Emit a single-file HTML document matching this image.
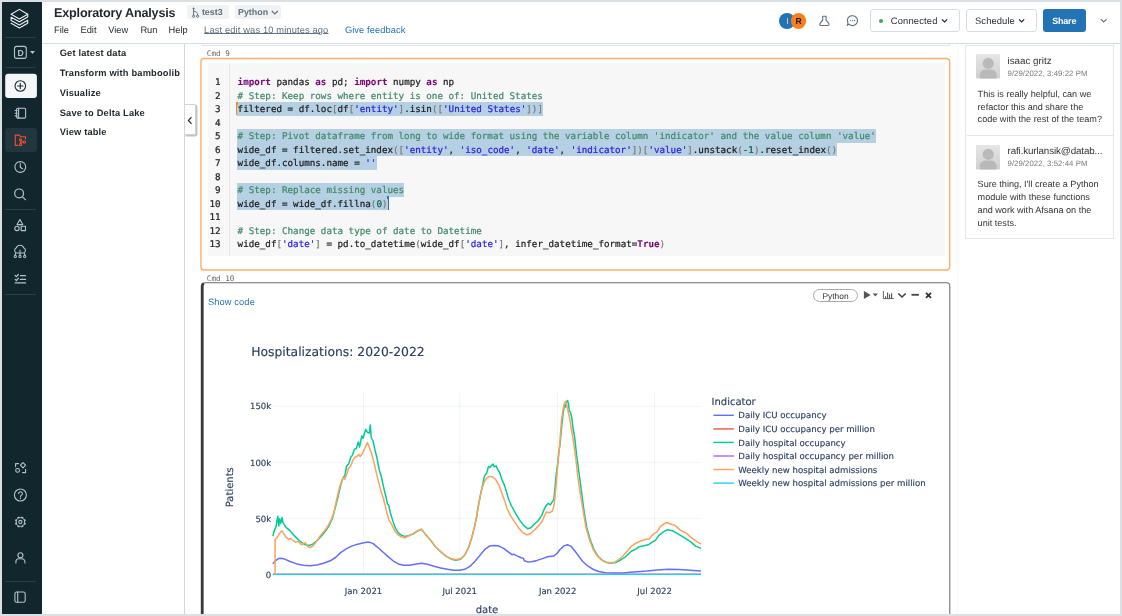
<!DOCTYPE html><html><head><meta charset="utf-8"><title>Exploratory Analysis</title><style>
*{box-sizing:border-box;margin:0;padding:0}
html,body{width:1122px;height:616px;overflow:hidden;background:#dce0e3}
body{font-family:"Liberation Sans",Arial,sans-serif;color:#1f272d;position:relative;text-rendering:geometricPrecision}
.abs{position:absolute}
.t{position:absolute;white-space:pre;line-height:1}
#bg{position:absolute;left:2px;top:2px;width:1118px;height:612px;background:#fff}
#page{position:absolute;left:2px;top:2px;width:1118px;height:612px;overflow:hidden;will-change:transform}
#side{position:absolute;left:0;top:0;width:40.3px;height:612px;background:#12262e}
.sep{position:absolute;left:3.2px;width:31.2px;height:1px;background:#2b3f48}
.ic{position:absolute;overflow:visible}
.menu{font-size:9.3px;color:#1f272d}
.lp{font-size:9.3px;font-weight:bold;color:#1f272d;left:57.7px;letter-spacing:0.17px}
.mono{font-family:"DejaVu Sans Mono","Liberation Mono",monospace}
.code{font-family:"DejaVu Sans Mono","Liberation Mono",monospace;font-size:9.22px;color:#1c1c1c;-webkit-text-stroke:0.22px currentColor}
.ln{position:absolute;left:206px;width:12.6px;text-align:right;font-family:"DejaVu Sans Mono","Liberation Mono",monospace;font-size:9.22px;color:#222;line-height:1;white-space:pre}
.cl{position:absolute;left:235.6px;white-space:pre;line-height:1}
.sel{position:absolute;background:#b5d0e3;height:13.7px}
.k{color:#7a0874;font-weight:bold;-webkit-text-stroke:0.08px currentColor}.c{color:#408a6a}.s{color:#2a22e6}.b{color:#7c7c7c}.n{color:#116644}
.cm{font-size:9.1px;color:#333;left:975.6px}
.dj{font-family:"DejaVu Sans","Liberation Sans",sans-serif}
</style></head><body><div id="bg"></div><div id="page">
<div id="side">
<svg class="ic" style="left:0;top:0" width="40" height="612" viewBox="2 2 40 612" fill="none" stroke-linecap="round" stroke-linejoin="round">
<g stroke="#eef1f3" stroke-width="1.1"><path d="M19.4,9.4 L27.7,14.3 L19.4,18.9 L11.1,14.3 Z"/><path d="M27.7,14.3 V17 L19.4,21.8 L11.1,17.2 V20.4 L19.4,24.9 L27.7,20.2 V23.2 L19.4,27.9 L11.1,23.2"/></g>
<g stroke="#b6c2ca" stroke-width="1.1"><rect x="14.5" y="46.4" width="11.8" height="12" rx="2.2"/></g><path d="M30,51 h5 l-2.5,3 z" fill="#b6c2ca"/>
<rect x="5.2" y="73.8" width="31.7" height="24.1" rx="3" fill="#f4f6f7"/><g stroke="#1b2a32" stroke-width="1.1"><circle cx="20.3" cy="86" r="5.3"/><path d="M20.3,83.3 v5.4 M17.6,86 h5.4"/></g>
<g stroke="#b6c2ca" stroke-width="1.1"><rect x="16.6" y="108.3" width="9" height="9.8" rx="1"/><path d="M18.6,108.3 v9.8 M15.2,110.5 h2 M15.2,113.2 h2 M15.2,115.9 h2"/></g>
<rect x="5.2" y="127.9" width="31.7" height="24.1" rx="3" fill="#22363f"/><g stroke="#ff4b2f" stroke-width="1.1"><path d="M17.9,145.4 h-2.6 v-10.3 h3.9 l1.4,1.7 h4.9 v2.2"/><circle cx="20.6" cy="139.9" r="1.1"/><circle cx="20.6" cy="144.5" r="1.1"/><circle cx="24.4" cy="142.1" r="1.1"/><path d="M20.6,141 v2.4 M21.7,142.1 h1.6"/></g>
<g stroke="#b6c2ca" stroke-width="1.1"><circle cx="20.3" cy="167" r="5.4"/><path d="M20.3,163.6 v3.6 l2.3,1.6"/></g>
<g stroke="#b6c2ca" stroke-width="1.2"><circle cx="19.1" cy="193.4" r="4.4"/><path d="M22.3,196.6 L25.4,199.7"/></g>
<g stroke="#b6c2ca" stroke-width="1.1"><path d="M19.9,219.6 L22.7,224.6 H17.1 Z"/><circle cx="17" cy="228.4" r="2.2"/><rect x="21.2" y="226.3" width="4.3" height="4.3"/></g>
<g stroke="#b6c2ca" stroke-width="1.05"><path d="M15.8,252.3 a2.6,2.6 0 0 1 0.6,-4.6 a3.9,3.9 0 0 1 7.3,0 a2.6,2.6 0 0 1 0.6,4.6"/><path d="M20,250 v5 M15.3,255 v-2 h9.4 v2"/><circle cx="15.3" cy="256.4" r="1.1"/><circle cx="20" cy="256.4" r="1.1"/><circle cx="24.7" cy="256.4" r="1.1"/></g>
<g stroke="#b6c2ca" stroke-width="1.2"><path d="M15.2,275.5 l1.2,1.2 l2,-2.4 M20.4,275.6 h5.2 M15.2,279.3 l1.2,1.2 l2,-2.4 M20.4,279.4 h5.2 M15.2,282.9 h10.4"/></g>
<g stroke="#b6c2ca" stroke-width="1.1"><path d="M18.6,463.6 h-3 v3.2 M22.6,472.6 h3 v-3.2"/><path d="M23,462.6 l2.6,2.6 l-2.6,2.6 l-2.6,-2.6 z"/><circle cx="17.6" cy="470.4" r="1.9"/></g>
<g stroke="#b6c2ca" stroke-width="1.1"><circle cx="20.4" cy="495" r="6"/><path d="M18.6,493.6 a1.9,1.9 0 1 1 2.8,1.7 c-0.7,0.4 -1,0.8 -1,1.6"/></g><circle cx="20.4" cy="498.6" r="0.7" fill="#b6c2ca"/>
<g stroke="#b6c2ca" stroke-width="1.1"><circle cx="20.4" cy="522" r="4.2"/><path d="M24.37,523.65 L25.48,524.10 M22.05,525.97 L22.50,527.08 M18.75,525.97 L18.30,527.08 M16.43,523.65 L15.32,524.10 M16.43,520.35 L15.32,519.90 M18.75,518.03 L18.30,516.92 M22.05,518.03 L22.50,516.92 M24.37,520.35 L25.48,519.90 " stroke-width="2.2" stroke-linecap="butt"/><circle cx="20.4" cy="522" r="3.4" fill="#12262e" stroke="none"/><circle cx="20.4" cy="522" r="1.6"/></g>
<g stroke="#b6c2ca" stroke-width="1.1"><circle cx="20.4" cy="555.2" r="2.5"/><path d="M15.9,563 v-1.2 a3,3 0 0 1 3,-3 h3 a3,3 0 0 1 3,3 v1.2"/></g>
<g stroke="#b6c2ca" stroke-width="1.1"><rect x="14.9" y="592" width="10.3" height="10.3" rx="1.8"/><path d="M17.7,592 v10.3"/></g>
</svg>
<span class="t" style="left:15.6px;top:47px;font-size:8.6px;font-weight:bold;color:#b6c2ca;">D</span>
<div class="sep" style="top:34.8px"></div>
<div class="sep" style="top:65.2px"></div>
<div class="sep" style="top:207.1px"></div>
<div class="sep" style="top:291.9px"></div>
<div class="sep" style="top:579.1px"></div>
</div>
<div class="abs" style="left:40px;top:41px;width:1078px;height:1px;background:#d3dce6"></div>
<span class="t" id="title" style="left:52px;top:5px;font-size:12.6px;letter-spacing:-0.17px;font-weight:bold;color:#1f272d">Exploratory Analysis</span>
<div class="abs" style="left:185.2px;top:2.9px;width:41.8px;height:14.3px;background:#f0f2f4;border-radius:3px"></div>
<svg class="ic" style="left:189px;top:4.5px" width="10" height="12" viewBox="191 6.5 10 12" fill="none" stroke="#5f7281" stroke-width="1"><circle cx="193.6" cy="15.7" r="1.1"/><circle cx="197.6" cy="15.7" r="1.1"/><circle cx="193.6" cy="8" r="0.6" fill="#5f7281"/><path d="M193.6,8 v6.6 M193.6,10.8 c2.8,0 4,1.2 4,3.8"/></svg>
<span class="t" id="test3" style="left:199.9px;top:6px;font-size:8.9px;font-weight:bold;color:#5f7281">test3</span>
<div class="abs" style="left:233.1px;top:2.9px;width:46.3px;height:14.3px;background:#f0f2f4;border-radius:3px"></div>
<span class="t" id="pybadge" style="left:236px;top:6px;font-size:8.9px;font-weight:bold;color:#5f7281">Python</span>
<svg class="ic" style="left:269.2px;top:8.4px" width="8" height="6" viewBox="0 0 8 6" fill="none" stroke="#5f7281" stroke-width="1.2"><path d="M0.8,1 L3.8,4 L6.8,1"/></svg>
<span class="t menu" id="m1" style="left:52px;top:24px">File</span>
<span class="t menu" id="m2" style="left:78.5px;top:24px">Edit</span>
<span class="t menu" id="m3" style="left:106.2px;top:24px">View</span>
<span class="t menu" id="m4" style="left:138.4px;top:24px">Run</span>
<span class="t menu" id="m5" style="left:166.5px;top:24px">Help</span>
<span class="t" id="lastedit" style="left:202.1px;top:24px;font-size:9.3px;letter-spacing:0.14px;color:#5f7281;text-decoration:underline;text-underline-offset:0.3px;text-decoration-thickness:0.8px">Last edit was 10 minutes ago</span>
<span class="t" id="feedback" style="left:342.9px;top:24px;font-size:9.3px;letter-spacing:0.09px;color:#2272b4">Give feedback</span>
<div class="abs" style="left:777.3px;top:11px;width:15.8px;height:15.8px;border-radius:50%;background:#2272b4"></div>
<span class="t" style="left:784.2px;top:15px;font-size:8.6px;color:#d5e6f4">I</span>
<div class="abs" style="left:788.6px;top:11px;width:15.8px;height:15.8px;border-radius:50%;background:#f97e1c"></div>
<span class="t" style="left:793.4px;top:15px;font-size:8.6px;font-weight:bold;color:#1a1a1a">R</span>
<svg class="ic" style="left:815px;top:11px" width="46" height="16" viewBox="817 13 46 16" fill="none" stroke="#5f7281" stroke-width="1.1" stroke-linejoin="round" stroke-linecap="round"><path d="M822.7,16.2 h3.4 v4 l2.8,3.4 q0.5,1.9 -1,1.9 h-7 q-1.5,0 -1,-1.9 l2.8,-3.4 z"/><path d="M852.6,15.6 a5,5 0 1 1 -3.6,8.5 l-1.6,1.2 l0.5,-2.3 a5,5 0 0 1 4.7,-7.4 z"/><path d="M850.6,20.6 h0.1 M852.6,20.6 h0.1 M854.6,20.6 h0.1" stroke-width="1.2"/></svg>
<div class="abs" style="left:868.2px;top:7.3px;width:90.2px;height:22.5px;border:1px solid #d3dde7;border-radius:3px"></div>
<div class="abs" style="left:876.8px;top:16.7px;width:4.4px;height:4.4px;border-radius:50%;background:#3ba65e"></div>
<span class="t" id="connected" style="left:888.8px;top:14px;font-size:9.4px;letter-spacing:0.15px;color:#1f272d">Connected</span>
<svg class="ic" style="left:939px;top:15.6px" width="8" height="6" viewBox="0 0 8 6" fill="none" stroke="#1f272d" stroke-width="1.15"><path d="M1,1.3 L3.6,3.9 L6.2,1.3"/></svg>
<div class="abs" style="left:963.8px;top:7.3px;width:71.2px;height:22.5px;border:1px solid #d3dde7;border-radius:3px"></div>
<span class="t" id="schedule" style="left:973px;top:14px;font-size:9.4px;letter-spacing:0.1px;color:#1f272d">Schedule</span>
<svg class="ic" style="left:1015.7px;top:15.6px" width="8" height="6" viewBox="0 0 8 6" fill="none" stroke="#1f272d" stroke-width="1.15"><path d="M1,1.3 L3.6,3.9 L6.2,1.3"/></svg>
<div class="abs" style="left:1041px;top:7.3px;width:43.1px;height:22.6px;background:#2272b4;border-radius:3px"></div>
<span class="t" id="share" style="left:1050.2px;top:15px;font-size:9px;letter-spacing:-0.2px;font-weight:bold;color:#fff">Share</span>
<svg class="ic" style="left:1097.6px;top:15.6px" width="8" height="6" viewBox="0 0 8 6" fill="none" stroke="#5f7281" stroke-width="1.1"><path d="M0.8,1.2 L3.7,4 L6.6,1.2"/></svg>
<div class="abs" style="left:182.2px;top:42px;width:1px;height:570px;background:#d6d6d6"></div>
<span class="t lp" id="l1" style="top:47.00px">Get latest data</span>
<span class="t lp" id="l2" style="top:67.00px">Transform with bamboolib</span>
<span class="t lp" id="l3" style="top:87.00px">Visualize</span>
<span class="t lp" id="l4" style="top:107.00px">Save to Delta Lake</span>
<span class="t lp" id="l5" style="top:126.00px">View table</span>
<div class="abs" style="left:182.6px;top:101.7px;width:11.4px;height:31.3px;background:#fff;border:1px solid #d2d2d2;border-left:none;border-radius:0 2px 2px 0;box-shadow:1px 1px 0 0.5px #c4c4c4"></div>
<svg class="ic" style="left:185px;top:114px" width="6" height="9" viewBox="0 0 6 9" fill="none" stroke="#333" stroke-width="1.25"><path d="M4.5,1.1 L1.4,4.5 L4.5,7.9"/></svg>
<div class="abs" style="left:198.6px;top:42px;width:749.7px;height:2px;border:1px solid #dfe3e7;border-top:none;border-radius:0 0 3px 3px"></div>
<div class="abs" style="left:954.9px;top:42px;width:1px;height:570px;background:#f8f9f9"></div>
<span class="t mono" id="cmd9" style="left:204.8px;top:48px;font-size:7.65px;color:#6a6a6a">Cmd 9</span>
<svg class="ic" style="left:0;top:0" width="1118" height="612" viewBox="2 2 1118 612" fill="none"><rect x="200.95" y="58.55" width="748.7" height="211.4" rx="3" stroke="#fcae6b" stroke-width="1.4"/></svg>
<div class="abs" style="left:205.8px;top:61px;width:737.2px;height:192.5px;background:#f7f7f7"></div>
<div class="abs" style="left:226.5px;top:61px;width:1px;height:192.5px;background:#e4e4e4"></div>
<div class="sel" style="left:235.4px;top:99.98px;width:305.9px"></div>
<div class="sel" style="left:235.4px;top:127.06px;width:638.9px"></div>
<div class="sel" style="left:235.4px;top:140.60px;width:600.1px"></div>
<div class="sel" style="left:235.4px;top:154.14px;width:139.4px"></div>
<div class="sel" style="left:235.4px;top:181.22px;width:167.1px"></div>
<div class="sel" style="left:235.4px;top:194.76px;width:150.5px"></div>
<div class="abs" style="left:234.2px;top:99.78px;width:1.3px;height:13.4px;background:#f28a1c"></div>
<div class="abs" style="left:234px;top:99.58px;width:2.4px;height:3px;background:#f28a1c;border-radius:0.6px"></div>
<div class="abs" style="left:385.5px;top:194.56px;width:1.2px;height:13.4px;background:#2272b4"></div>
<div class="abs" style="left:385.1px;top:194.36px;width:2.2px;height:3px;background:#2272b4;border-radius:0.6px"></div>
<div class="code">
<span class="ln" style="top:76.00px">1</span>
<span class="cl" id="c1" style="top:76.00px"><span class="k">import</span> pandas <span class="k">as</span> pd; <span class="k">import</span> numpy <span class="k">as</span> np</span>
<span class="ln" style="top:90.00px">2</span>
<span class="cl" id="c2" style="top:90.00px"><span class="c"># Step: Keep rows where entity is one of: United States</span></span>
<span class="ln" style="top:103.00px">3</span>
<span class="cl" id="c3" style="top:103.00px">filtered = df.loc<span class="b">[</span>df<span class="b">[</span><span class="s">'entity'</span><span class="b">]</span>.isin<span class="b">([</span><span class="s">'United States'</span><span class="b">])]</span></span>
<span class="ln" style="top:117.00px">4</span>
<span class="ln" style="top:130.00px">5</span>
<span class="cl" id="c5" style="top:130.00px"><span class="c"># Step: Pivot dataframe from long to wide format using the variable column 'indicator' and the value column 'value'</span></span>
<span class="ln" style="top:144.00px">6</span>
<span class="cl" id="c6" style="top:144.00px">wide_df = filtered.set_index<span class="b">([</span><span class="s">'entity'</span>, <span class="s">'iso_code'</span>, <span class="s">'date'</span>, <span class="s">'indicator'</span><span class="b">])[</span><span class="s">'value'</span><span class="b">]</span>.unstack<span class="b">(</span><span class="n">-1</span><span class="b">)</span>.reset_index<span class="b">()</span></span>
<span class="ln" style="top:157.00px">7</span>
<span class="cl" id="c7" style="top:157.00px">wide_df.columns.name = <span class="s">''</span></span>
<span class="ln" style="top:171.00px">8</span>
<span class="ln" style="top:184.00px">9</span>
<span class="cl" id="c9" style="top:184.00px"><span class="c"># Step: Replace missing values</span></span>
<span class="ln" style="top:198.00px">10</span>
<span class="cl" id="c10" style="top:198.00px">wide_df = wide_df.fillna<span class="b">(</span><span class="n">0</span><span class="b">)</span></span>
<span class="ln" style="top:211.00px">11</span>
<span class="ln" style="top:225.00px">12</span>
<span class="cl" id="c12" style="top:225.00px"><span class="c"># Step: Change data type of date to Datetime</span></span>
<span class="ln" style="top:238.00px">13</span>
<span class="cl" id="c13" style="top:238.00px">wide_df<span class="b">[</span><span class="s">'date'</span><span class="b">]</span> = pd.to_datetime<span class="b">(</span>wide_df<span class="b">[</span><span class="s">'date'</span><span class="b">]</span>, infer_datetime_format=<span class="k">True</span><span class="b">)</span></span>
</div>
<span class="t mono" id="cmd10" style="left:204.8px;top:273px;font-size:7.65px;color:#6a6a6a">Cmd 10</span>
<svg class="ic" style="left:0;top:0" width="1118" height="612" viewBox="2 2 1118 612" fill="none"><path d="M202.6,620 V285.9 a3.2,3.2 0 0 1 3.2,-3.2 H946.6 a3.2,3.2 0 0 1 3.2,3.2 V620" stroke="#6c6c6c" stroke-width="1.05"/><path d="M202.2,620 V286 a3,3 0 0 1 1.6,-2.6" stroke="#3a3a3a" stroke-width="2.8"/></svg>
<span class="t" id="showcode" style="left:206px;top:296px;font-size:9.3px;letter-spacing:0.1px;color:#2272b4">Show code</span>
<div class="abs" style="left:811.1px;top:287.3px;width:44.7px;height:12.5px;border:1px solid #aaa;border-radius:7px"></div>
<span class="t" id="pypill" style="left:820.5px;top:290px;font-size:8.4px;color:#333">Python</span>
<svg class="ic" style="left:858px;top:286px" width="76" height="16" viewBox="860 288 76 16"><path d="M863.9,291 L870.7,295 L863.9,299 Z" fill="#555"/><path d="M872.7,293.6 h5.2 l-2.6,2.9 z" fill="#555"/><g stroke="#555" fill="none" stroke-width="0.9"><path d="M883.4,291 v7.6 h10.4"/><path d="M885.6,298.6 v-2.4 M887.6,298.6 v-6 M889.6,298.6 v-4.4 M891.6,298.6 v-5.4" stroke-width="1.1"/></g><path d="M898.3,293.5 L902,297 L905.7,293.5" fill="none" stroke="#444" stroke-width="1.6"/><path d="M911.5,294.8 h7.4" stroke="#444" stroke-width="1.8"/><path d="M926,292.8 L931,297.8 M931,292.8 L926,297.8" stroke="#333" stroke-width="1.8"/></svg>
<svg class="ic dj" style="left:0;top:0" width="1118" height="612" viewBox="2 2 1118 612" font-family="DejaVu Sans, Liberation Sans, sans-serif">
<g stroke="#ebf0f8" stroke-width="0.75">
<path d="M272.8,406.3 H701.3"/>
<path d="M272.8,462.4 H701.3"/>
<path d="M272.8,518.4 H701.3"/>
<path d="M363.5,391.5 V574.4"/>
<path d="M459.7,391.5 V574.4"/>
<path d="M557.6,391.5 V574.4"/>
<path d="M654.6,391.5 V574.4"/>
</g>
<g fill="none" stroke-width="1.5" stroke-linejoin="round">
<path d="M272.9,563.9 L275.3,560.8 L278.0,558.8 L280.7,558.2 L284.7,559.1 L290.0,561.5 L296.7,563.9 L303.4,565.2 L310.1,565.8 L316.8,565.0 L323.5,563.2 L330.2,560.8 L335.5,557.5 L340.9,552.4 L346.2,548.8 L351.6,546.1 L356.9,544.4 L363.6,542.8 L368.9,542.1 L372.9,543.4 L377.0,546.8 L382.3,551.5 L387.6,556.1 L393.0,560.8 L398.3,563.9 L403.7,565.2 L409.0,565.2 L415.3,564.2 L421.4,563.2 L427.4,564.2 L434.1,566.2 L440.7,567.9 L447.4,569.3 L454.1,570.2 L459.5,570.3 L464.8,569.3 L470.2,566.2 L475.5,560.8 L480.9,554.1 L485.5,548.8 L489.5,546.1 L494.2,545.5 L498.9,546.1 L503.6,548.4 L508.9,552.4 L512.3,554.8 L513.6,554.1 L517.0,555.9 L521.0,557.8 L523.4,558.2 L524.3,560.8 L527.6,561.9 L531.7,561.8 L537.0,560.4 L542.4,558.6 L547.7,556.8 L553.7,556.1 L557.0,553.5 L560.0,549.5 L564.0,545.9 L567.4,544.8 L570.7,546.1 L574.7,550.8 L578.7,556.1 L582.7,561.5 L588.1,566.2 L593.4,569.5 L598.8,571.5 L605.5,572.7 L613.5,573.1 L622.8,572.9 L633.5,571.9 L646.9,571.1 L657.6,570.1 L668.3,569.3 L679.0,569.5 L689.7,570.2 L701.0,571.1" stroke="#636efa"/>
<path d="M272.9,574.3 H701" stroke="#ef553b" stroke-width="1.2"/>
<path d="M272.9,536.1 L274.0,531.4 L276.0,526.7 L277.8,516.3 L278.8,526.0 L279.6,518.7 L280.7,523.4 L282.0,517.6 L283.0,522.7 L286.0,527.4 L290.0,530.7 L294.0,535.4 L298.0,539.4 L302.0,542.8 L305.4,544.8 L308.8,545.5 L312.8,544.1 L316.8,540.8 L320.8,536.8 L324.8,532.1 L328.8,526.1 L332.2,518.7 L334.8,509.4 L337.5,499.0 L340.5,485.8 L343.1,477.7 L344.9,475.6 L346.6,466.0 L348.8,463.9 L350.7,457.3 L352.5,455.1 L354.4,449.2 L356.3,448.5 L358.3,441.9 L359.5,447.0 L361.7,436.1 L363.1,438.3 L365.6,429.5 L367.5,432.4 L369.4,432.9 L370.3,425.1 L371.2,437.5 L372.9,440.5 L374.8,449.2 L377.0,458.0 L379.2,469.7 L381.4,477.0 L383.6,487.3 L385.8,496.0 L387.5,504.1 L388.7,504.8 L390.3,512.7 L393.0,521.4 L395.7,528.7 L398.3,532.8 L401.7,535.4 L405.0,536.4 L409.0,535.4 L413.0,534.1 L417.0,531.4 L421.4,529.3 L424.7,533.4 L430.0,539.4 L435.4,546.8 L440.7,551.7 L446.1,556.4 L451.4,559.2 L456.1,560.3 L460.8,559.0 L464.8,555.0 L468.8,547.0 L472.2,536.1 L474.8,525.4 L476.8,516.0 L477.6,510.0 L480.5,494.5 L482.7,484.3 L484.4,476.4 L486.7,473.0 L488.4,466.7 L490.1,467.3 L491.3,465.6 L493.0,464.1 L494.1,466.7 L496.1,465.9 L498.1,470.1 L499.8,473.0 L502.0,479.8 L504.3,484.9 L506.6,492.3 L508.9,500.2 L511.6,506.0 L515.6,513.4 L519.6,520.1 L523.6,525.4 L527.6,528.7 L531.0,527.7 L534.3,524.1 L538.3,520.7 L541.7,515.4 L544.4,508.7 L546.4,505.3 L548.1,503.4 L550.3,504.8 L552.6,501.4 L553.8,499.7 L554.9,488.9 L556.0,476.4 L557.7,462.7 L558.9,451.4 L560.0,444.5 L561.9,424.2 L563.4,411.5 L564.6,404.7 L565.5,407.1 L566.5,401.7 L567.5,400.6 L568.5,403.7 L569.2,411.0 L570.4,412.0 L571.7,417.3 L573.1,429.0 L574.6,436.8 L576.7,455.9 L579.0,473.0 L581.3,490.0 L583.9,510.0 L586.6,526.7 L589.9,538.8 L593.9,549.5 L597.9,556.1 L602.4,560.4 L606.8,562.6 L610.8,563.0 L614.8,562.8 L620.2,560.2 L625.5,556.8 L630.9,551.5 L636.2,548.8 L638.9,546.8 L642.9,546.1 L648.2,544.8 L652.3,542.1 L655.6,540.1 L658.9,535.4 L663.0,532.1 L667.6,529.7 L672.3,530.7 L677.0,533.4 L681.7,536.1 L687.0,539.4 L691.0,542.1 L695.7,546.1 L701.0,548.4" stroke="#00cc96"/>
<path d="M272.9,574.3 H701" stroke="#ab63fa" stroke-width="1.2"/>
<path d="M275.1,574.2 L275.1,539.8 L278.0,536.1 L280.7,531.7 L282.3,531.0 L284.0,534.1 L286.0,537.4 L288.7,539.2 L290.7,538.5 L293.4,540.8 L295.4,542.1 L298.0,541.2 L301.4,544.8 L304.1,543.0 L305.4,542.8 L308.1,546.8 L310.1,547.5 L312.8,546.1 L315.5,542.8 L319.5,536.8 L323.5,532.1 L327.5,526.7 L330.8,520.7 L333.5,513.4 L335.5,505.3 L336.8,499.0 L339.7,486.5 L341.9,480.7 L343.4,477.7 L344.9,479.2 L347.0,473.4 L348.5,468.2 L350.7,466.1 L352.9,460.2 L354.8,457.3 L356.8,456.5 L358.7,454.4 L360.2,456.5 L362.4,453.6 L364.6,448.5 L367.5,442.7 L369.7,448.5 L371.9,454.4 L374.1,463.1 L376.3,472.6 L378.5,481.4 L380.7,490.2 L383.6,499.0 L386.3,510.7 L389.0,520.0 L391.7,524.7 L395.0,531.4 L398.3,535.0 L401.7,537.0 L405.0,537.7 L409.0,535.8 L413.0,533.7 L417.0,531.0 L421.4,529.1 L424.7,533.4 L430.0,539.4 L435.4,546.8 L440.7,551.5 L446.1,556.1 L451.4,558.8 L456.1,559.8 L460.8,558.6 L464.8,554.8 L468.8,546.8 L472.2,536.1 L474.8,525.4 L476.8,516.0 L477.6,510.0 L479.9,498.0 L482.2,487.7 L484.4,481.5 L487.3,477.5 L490.1,476.4 L493.0,477.2 L495.8,479.8 L499.2,485.5 L502.0,493.4 L504.9,501.4 L506.9,508.0 L510.3,515.4 L514.3,521.4 L518.3,527.4 L522.3,532.1 L525.6,534.4 L527.6,534.8 L530.3,533.7 L534.3,530.1 L538.3,526.1 L541.7,522.1 L544.4,516.0 L546.4,512.0 L549.7,512.7 L552.0,511.4 L553.7,506.7 L554.5,501.4 L556.3,483.2 L558.0,462.7 L559.7,444.5 L561.4,421.2 L562.9,410.5 L564.4,403.7 L565.5,401.3 L566.8,404.7 L568.3,412.5 L569.7,418.3 L571.2,428.1 L573.1,438.8 L575.6,457.0 L577.8,476.4 L580.1,492.3 L583.0,510.0 L585.8,526.7 L589.2,538.8 L593.2,549.5 L597.4,556.1 L602.1,560.4 L606.8,562.6 L610.8,562.8 L614.8,562.2 L618.8,559.5 L624.2,554.8 L628.2,550.1 L631.5,546.1 L636.2,543.0 L641.6,540.8 L646.2,539.2 L648.9,539.2 L651.6,536.1 L654.3,533.4 L656.9,532.1 L660.3,526.7 L663.6,524.1 L666.7,522.5 L669.6,523.8 L675.0,525.4 L680.3,530.1 L686.4,533.4 L691.0,537.4 L696.4,541.4 L701.0,544.1" stroke="#ffa15a"/>
<path d="M272.9,574.3 H701" stroke="#19d3f3" stroke-width="1.3"/>
</g>
<g fill="#2a3f5f" stroke="#2a3f5f" stroke-width="0.15">
<text id="ctitle" x="251.2" y="356.4" font-size="12.37">Hospitalizations: 2020-2022</text>
<text x="271.2" y="409.4" font-size="8.5" text-anchor="end">150k</text>
<text x="271.2" y="465.5" font-size="8.5" text-anchor="end">100k</text>
<text x="271.2" y="521.5" font-size="8.5" text-anchor="end">50k</text>
<text x="271.2" y="577.6" font-size="8.5" text-anchor="end">0</text>
<text x="363.5" y="593.7" font-size="8.5" text-anchor="middle">Jan 2021</text>
<text x="459.7" y="593.7" font-size="8.5" text-anchor="middle">Jul 2021</text>
<text x="557.6" y="593.7" font-size="8.5" text-anchor="middle">Jan 2022</text>
<text x="654.6" y="593.7" font-size="8.5" text-anchor="middle">Jul 2022</text>
<text x="487" y="612.6" font-size="10" text-anchor="middle">date</text>
<text transform="translate(233,487.2) rotate(-90)" font-size="10" text-anchor="middle">Patients</text>
<text x="711.5" y="404.8" font-size="10">Indicator</text>
<path d="M713.4,415.3 h20.4" stroke="#636efa" stroke-width="1.4"/>
<text id="lg0" x="738.3" y="418.4" font-size="8.6">Daily ICU occupancy</text>
<path d="M713.4,428.9 h20.4" stroke="#ef553b" stroke-width="1.4"/>
<text id="lg1" x="738.3" y="432.0" font-size="8.6">Daily ICU occupancy per million</text>
<path d="M713.4,442.4 h20.4" stroke="#00cc96" stroke-width="1.4"/>
<text id="lg2" x="738.3" y="445.5" font-size="8.6">Daily hospital occupancy</text>
<path d="M713.4,456.0 h20.4" stroke="#ab63fa" stroke-width="1.4"/>
<text id="lg3" x="738.3" y="459.1" font-size="8.6">Daily hospital occupancy per million</text>
<path d="M713.4,469.5 h20.4" stroke="#ffa15a" stroke-width="1.4"/>
<text id="lg4" x="738.3" y="472.6" font-size="8.6">Weekly new hospital admissions</text>
<path d="M713.4,483.1 h20.4" stroke="#19d3f3" stroke-width="1.4"/>
<text id="lg5" x="738.3" y="486.2" font-size="8.6">Weekly new hospital admissions per million</text>
</g></svg>
<div class="abs" style="left:962.5px;top:43.3px;width:149.5px;height:194px;border:1px solid #e6e6e6"></div>
<div class="abs" style="left:965px;top:132.9px;width:146px;height:1px;background:#e6e6e6"></div>
<svg class="ic" style="left:973.9px;top:52px" width="24" height="24.4" viewBox="0 0 24 24.4"><defs><linearGradient id="g0" x1="0" y1="0" x2="0" y2="1"><stop offset="0" stop-color="#e6e6e6"/><stop offset="1" stop-color="#d0d0d0"/></linearGradient></defs><rect width="24" height="24.4" fill="url(#g0)"/><circle cx="12.2" cy="9.4" r="5.6" fill="#b9b9b9"/><path d="M3.8,24.4 v-3.4 a5.4,5.4 0 0 1 5.4,-5.4 h6 a5.4,5.4 0 0 1 5.4,5.4 v3.4 z" fill="#b9b9b9"/></svg>
<span class="t" id="nm0" style="left:1005.5px;top:55px;font-size:9.8px;letter-spacing:0px;color:#333">isaac gritz</span>
<span class="t" id="dt0" style="left:1005.5px;top:68px;font-size:7.8px;letter-spacing:0.05px;color:#7a7a7a">9/29/2022, 3:49:22 PM</span>
<span class="t cm" id="cm00" style="top:88px">This is really helpful, can we</span>
<span class="t cm" id="cm01" style="top:101px">refactor this and share the</span>
<span class="t cm" id="cm02" style="top:113px">code with the rest of the team?</span>
<svg class="ic" style="left:973.9px;top:143px" width="24" height="24.4" viewBox="0 0 24 24.4"><defs><linearGradient id="g1" x1="0" y1="0" x2="0" y2="1"><stop offset="0" stop-color="#e6e6e6"/><stop offset="1" stop-color="#d0d0d0"/></linearGradient></defs><rect width="24" height="24.4" fill="url(#g1)"/><circle cx="12.2" cy="9.4" r="5.6" fill="#b9b9b9"/><path d="M3.8,24.4 v-3.4 a5.4,5.4 0 0 1 5.4,-5.4 h6 a5.4,5.4 0 0 1 5.4,5.4 v3.4 z" fill="#b9b9b9"/></svg>
<span class="t" id="nm1" style="left:1005.5px;top:145px;font-size:9.8px;letter-spacing:-0.12px;color:#333">rafi.kurlansik@datab...</span>
<span class="t" id="dt1" style="left:1005.5px;top:158px;font-size:7.8px;letter-spacing:0.05px;color:#7a7a7a">9/29/2022, 3:52:44 PM</span>
<span class="t cm" id="cm10" style="top:178px">Sure thing, I'll create a Python</span>
<span class="t cm" id="cm11" style="top:191px">module with these functions</span>
<span class="t cm" id="cm12" style="top:204px">and work with Afsana on the</span>
<span class="t cm" id="cm13" style="top:217px">unit tests.</span>
</div></body></html>
